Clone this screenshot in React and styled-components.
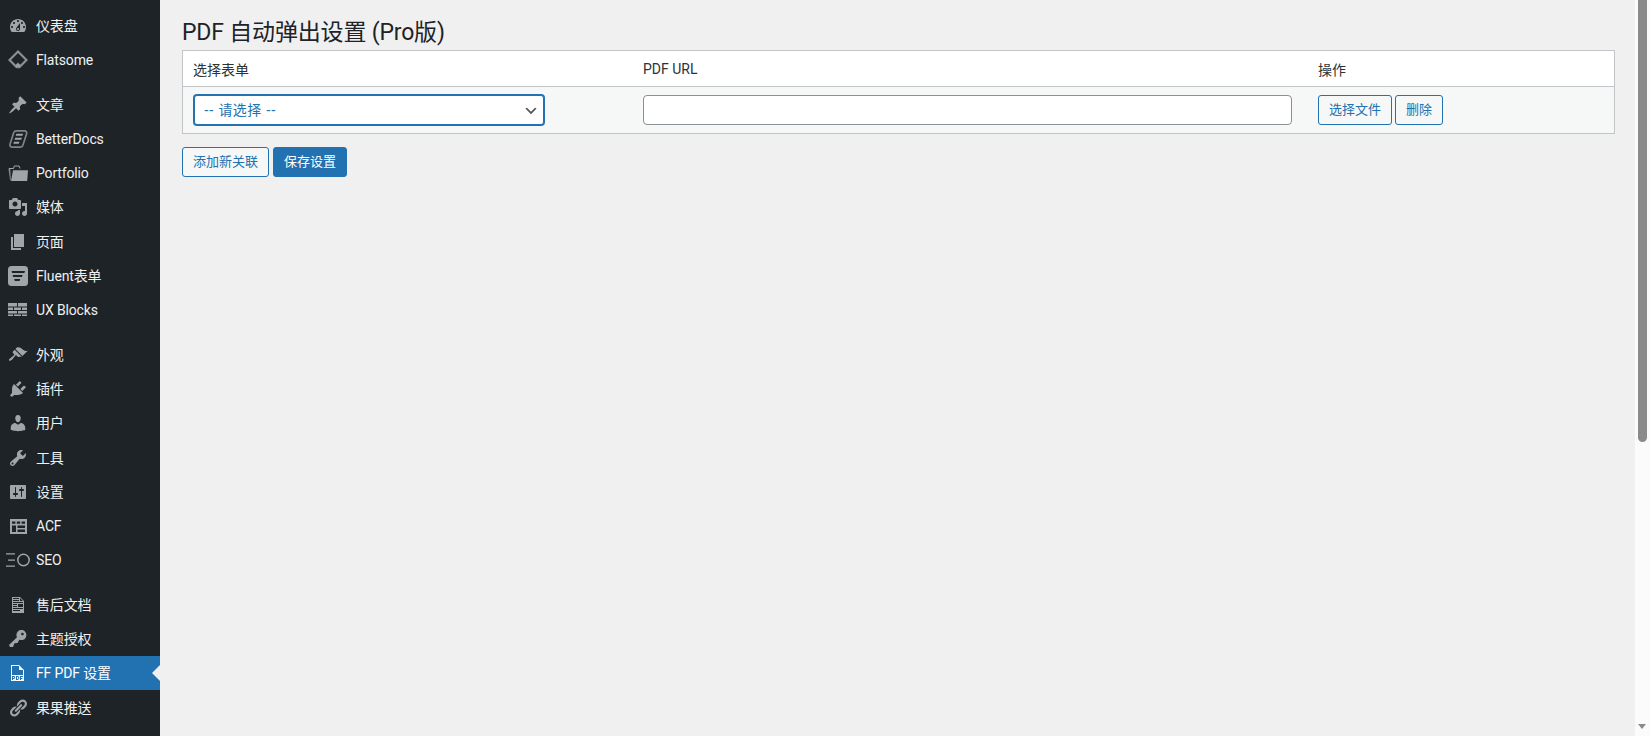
import React from "react";
import styled, { createGlobalStyle } from "styled-components";

const FONT = `Roboto, "Noto Sans CJK SC", sans-serif`;
const CHEVRON = `url("data:image/svg+xml,%3Csvg xmlns='http://www.w3.org/2000/svg' width='20' height='20' viewBox='0 0 20 20'%3E%3Cpath d='M5 6l5 5 5-5 2 1-7 7-7-7z' fill='%23555'/%3E%3C/svg%3E")`;

const Global = createGlobalStyle`
  html, body { margin: 0; height: 100%; overflow: hidden; background: #f0f0f1; }
  #root { height: 100%; }
  * { box-sizing: border-box; }
`;

const Page = styled.div`
  display: flex;
  height: 736px;
  font-family: ${FONT};
  color: #1d2327;
`;

const Sidebar = styled.nav`
  flex: 0 0 160px;
  height: 736px;
  overflow: hidden;
  background: #1d2327;
  padding-top: 8.8px;
`;

const MenuGroup = styled.ul`
  list-style: none;
  margin: 0 0 10px;
  padding: 0;
`;

const MenuItem = styled.li`
  position: relative;
  display: flex;
  align-items: center;
  height: 34.3px;
  padding-left: 36px;
  font-size: 14px;
  line-height: 18px;
  letter-spacing: -0.15px;
  color: ${(p) => (p.$active ? "#fff" : "#f0f0f1")};
  background: ${(p) => (p.$active ? "#2271b1" : "transparent")};

  &::after {
    content: "";
    display: ${(p) => (p.$active ? "block" : "none")};
    position: absolute;
    right: 0;
    top: 50%;
    margin-top: -8px;
    border: 8px solid transparent;
    border-left-width: 0;
    border-right-color: #f0f0f1;
  }
`;

const IconSlot = styled.span`
  position: absolute;
  left: ${(p) => p.$left ?? 8}px;
  top: 50%;
  transform: translateY(-50%);
  display: flex;
  color: ${(p) => (p.$active ? "#fff" : "#a0a5aa")};
`;

const Main = styled.main`
  flex: 1;
  min-width: 0;
  padding: 0 19px 0 22px;
`;

const Title = styled.h1`
  margin: 0;
  padding: 17px 0 0;
  height: 50px;
  font-size: 23px;
  font-weight: 400;
  line-height: 31px;
  letter-spacing: -0.18px;
  color: #1d2327;
`;

const Table = styled.table`
  width: 1433px;
  table-layout: fixed;
  border-collapse: separate;
  border-spacing: 0;
  border: 1px solid #c3c4c7;
  background: #fff;
  font-size: 13px;
`;

const HeadCell = styled.th`
  height: 36px;
  padding: 0 10px;
  text-align: left;
  font-weight: 400;
  font-size: 14px;
  color: #2c3338;
  background: #fff;
  border-bottom: 1px solid #c3c4c7;
`;

const BodyCell = styled.td`
  height: 46px;
  padding: 0 10px;
  background: #f6f7f7;
`;

const FormSelect = styled.select`
  display: block;
  appearance: none;
  width: 350px;
  height: 30px;
  margin-left: 1px;
  padding: 0 24px 0 9px;
  font: 14px/28px "Liberation Sans", "Noto Sans CJK SC", sans-serif;
  letter-spacing: 0.4px;
  color: #2271b1;
  background: #fff ${CHEVRON} no-repeat right 4px top 55%;
  background-size: 16px 16px;
  border: 1px solid #2271b1;
  border-radius: 3px;
  box-shadow: 0 0 0 1px #2271b1;
  outline: none;
`;

const UrlInput = styled.input`
  display: block;
  width: 649px;
  height: 30px;
  padding: 0 8px;
  font: 14px ${FONT};
  background: #fff;
  border: 1px solid #8c8f94;
  border-radius: 4px;
  outline: none;
`;

const ButtonRow = styled.div`
  display: flex;
  gap: ${(p) => p.$gap}px;
`;

const Button = styled.button`
  height: 30px;
  padding: 0 10px;
  font: 13px/28px ${FONT};
  color: ${(p) => (p.$primary ? "#fff" : "#2271b1")};
  background: ${(p) => (p.$primary ? "#2271b1" : "#f6f7f7")};
  border: 1px solid #2271b1;
  border-radius: 3px;
  white-space: nowrap;
`;

const Actions = styled(ButtonRow)`
  margin-top: 13px;
`;

const Scrollbar = styled.div`
  position: relative;
  flex: 0 0 15px;
  height: 736px;
  background: #fbfbfb;
`;

const Thumb = styled.div`
  position: absolute;
  left: 3px;
  top: 0;
  width: 9px;
  height: 442px;
  background: #8a8a8a;
  border-radius: 0 0 5px 5px;
`;

const ArrowDown = styled.div`
  position: absolute;
  left: 3px;
  bottom: 7px;
  border-style: solid;
  border-width: 5px 4.5px 0;
  border-color: #8a8a8a transparent transparent;
`;

const Svg = ({ size = 20, children, vb = "0 0 20 20" }) => (
  <svg width={size} height={size} viewBox={vb} fill="currentColor" aria-hidden="true">
    {children}
  </svg>
);

const P = (d) => () => <Svg><path d={d} /></Svg>;

const Dashboard = P("M3.76 16h12.48c1.1-1.37 1.76-3.11 1.76-5 0-4.42-3.58-8-8-8s-8 3.58-8 8c0 1.89.66 3.63 1.76 5zM10 4c.55 0 1 .45 1 1s-.45 1-1 1-1-.45-1-1 .45-1 1-1zM6 6c.55 0 1 .45 1 1s-.45 1-1 1-1-.45-1-1 .45-1 1-1zm8 0c.55 0 1 .45 1 1s-.45 1-1 1-1-.45-1-1 .45-1 1-1zm-5.37 5.55L12 7v6c0 1.1-.9 2-2 2s-2-.9-2-2c0-.57.24-1.08.63-1.45zM4 10c.55 0 1 .45 1 1s-.45 1-1 1-1-.45-1-1 .45-1 1-1zm12 0c.55 0 1 .45 1 1s-.45 1-1 1-1-.45-1-1 .45-1 1-1zm-5 3c0-.55-.45-1-1-1s-1 .45-1 1 .45 1 1 1 1-.45 1-1z");
const Pin = P("M10.44 3.02l1.82-1.82 6.36 6.35-1.83 1.82c-1.05-.68-2.48-.57-3.41.36l-.75.75c-.92.93-1.04 2.35-.35 3.41l-1.83 1.82-2.41-2.41-2.8 2.79c-.42.42-3.38 2.71-3.8 2.29s1.86-3.39 2.28-3.81l2.79-2.79L4.1 9.36l1.83-1.82c1.05.69 2.48.57 3.4-.36l.75-.75c.93-.92 1.05-2.35.36-3.41z");
const Brush = P("M14.48 11.06L7.41 3.99l1.5-1.5c.5-.56 2.3-.47 3.51.32 1.21.8 1.43 1.28 2.91 2.1 1.18.64 2.45 1.26 4.45.85zm-.71.71L6.7 4.7 4.93 6.47c-.39.39-.39 1.02 0 1.41l1.06 1.06c.39.39.39 1.03 0 1.42-.6.6-1.43 1.11-2.21 1.69-.35.26-.7.53-1.01.84C1.43 13.23.4 14.85 1.1 15.55s2.32-.33 3.66-1.67c.31-.31.58-.66.84-1.01.58-.78 1.09-1.61 1.69-2.21.39-.39 1.02-.39 1.41 0l1.06 1.06c.39.39 1.02.39 1.41 0z");
const Plug = P("M13.11 4.36L9.87 7.6 8 5.73l3.24-3.24c.35-.34 1.05-.2 1.56.32.52.51.66 1.21.31 1.55zm-8 1.77l.91-1.12 9.01 9.01-1.19.84c-.71.71-2.63 1.16-3.82 1.16H6.14L4.9 17.26c-.59.59-1.54.59-2.12 0-.59-.58-.59-1.53 0-2.12l1.24-1.24v-3.88c0-1.13.4-3.19 1.09-3.89zm7.26 3.97l3.24-3.24c.34-.35 1.04-.21 1.55.31.52.51.66 1.21.31 1.55l-3.24 3.25z");
const User = P("M10 9.25c-2.27 0-2.73-3.44-2.73-3.44C7 4.02 7.82 2 9.97 2c2.16 0 2.98 2.02 2.71 3.81 0 0-.41 3.44-2.68 3.44zm0 2.57L12.72 10c2.39 0 4.52 2.33 4.52 4.53v2.49s-3.65 1.13-7.24 1.13c-3.65 0-7.24-1.13-7.24-1.13v-2.49c0-2.25 1.94-4.48 4.47-4.48z");
const Wrench = P("M16.68 9.77c-1.34 1.34-3.3 1.67-4.95.99l-5.41 6.52c-.99.99-2.59.99-3.58 0s-.99-2.59 0-3.57l6.52-5.42c-.68-1.65-.35-3.61.99-4.95 1.28-1.28 3.12-1.62 4.72-1.06l-2.89 2.89 2.82 2.82 2.86-2.87c.53 1.58.18 3.39-1.08 4.65zM3.81 16.21c.4.39 1.04.39 1.43 0 .4-.4.4-1.04 0-1.43-.39-.4-1.03-.4-1.43 0-.39.39-.39 1.03 0 1.43z");
const Sliders = P("M18 16V4c0-.55-.45-1-1-1H3c-.55 0-1 .45-1 1v12c0 .55.45 1 1 1h14c.55 0 1-.45 1-1zM8 11h1c.55 0 1 .45 1 1s-.45 1-1 1H8v1.5c0 .28-.22.5-.5.5s-.5-.22-.5-.5V13H6c-.55 0-1-.45-1-1s.45-1 1-1h1V5.5c0-.28.22-.5.5-.5s.5.22.5.5V11zm5-2h-1c-.55 0-1-.45-1-1s.45-1 1-1h1V5.5c0-.28.22-.5.5-.5s.5.22.5.5V7h1c.55 0 1 .45 1 1s-.45 1-1 1h-1v5.5c0 .28-.22.5-.5.5s-.5-.22-.5-.5V9z");
const Media = P("M13 11V4c0-.55-.45-1-1-1h-1.67L9 1H5L3.67 3H2c-.55 0-1 .45-1 1v7c0 .55.45 1 1 1h10c.55 0 1-.45 1-1zM7 4.5c1.38 0 2.5 1.12 2.5 2.5S8.38 9.5 7 9.5 4.5 8.38 4.5 7 5.62 4.5 7 4.5zM14 6h5v10.5c0 1.38-1.12 2.5-2.5 2.5S14 17.88 14 16.5s1.12-2.5 2.5-2.5c.17 0 .34.02.5.05V9h-3V6zm-4 8.05V13h2v3.5c0 1.38-1.12 2.5-2.5 2.5S7 17.88 7 16.5 8.12 14 9.5 14c.17 0 .34.02.5.05z");
const Pages = P("M6 15V2h10v13H6zm-1 1h8v2H3V5h2v11z");
const Key = P("M16.95 2.58c1.96 1.95 1.96 5.12 0 7.07-1.51 1.51-3.75 1.84-5.59 1.01l-1.87 3.31-2.99.31L5 18H2l-1-2 7.95-7.69c-.92-1.87-.62-4.18.93-5.73 1.95-1.96 5.12-1.96 7.07 0zm-2.51 3.79c.74 0 1.33-.6 1.33-1.34 0-.73-.59-1.33-1.33-1.33-.73 0-1.33.6-1.33 1.33 0 .74.6 1.34 1.33 1.34z");
const Link = P("M17.74 2.76c1.68 1.69 1.68 4.41 0 6.1l-1.53 1.52c-1.12 1.12-2.7 1.47-4.14 1.09l2.62-2.61.76-.77.76-.76c.84-.84.84-2.2 0-3.04-.84-.85-2.2-.85-3.04 0l-.77.76-3.38 3.38c-.37-1.44-.02-3.02 1.1-4.14l1.52-1.53c1.69-1.68 4.42-1.68 6.1 0zM8.59 13.43l5.34-5.34c.42-.42.42-1.1 0-1.52-.44-.43-1.13-.39-1.53 0l-5.33 5.34c-.42.42-.42 1.1 0 1.52.44.43 1.13.39 1.52 0zm-.76 2.29l4.14-4.15c.38 1.44.03 3.02-1.09 4.14l-1.52 1.53c-1.69 1.68-4.41 1.68-6.1 0-1.68-1.68-1.68-4.42 0-6.1l1.53-1.52c1.12-1.12 2.7-1.47 4.14-1.1l-4.14 4.15c-.85.84-.85 2.2 0 3.05.84.84 2.2.84 3.04 0z");
const Doc = P("M12 2l4 4v12H4V2h8zM5 3v1h6V3H5zm7 3h3l-3-3v3zM5 5v1h6V5H5zm10 3V7H5v1h10zM5 9v1h4V9H5zm10 3V9h-5v3h5zM5 11v1h4v-1H5zm10 3v-1H5v1h10zm-3 2v-1H5v1h7z");
const Pdf = P("M5.8 14H5v1h.8c.3 0 .5-.2.5-.5s-.2-.5-.5-.5zM11 2H3v16h13V7l-5-5zM7.2 14.6c0 .8-.6 1.4-1.4 1.4H5v1H4v-4h1.8c.8 0 1.4.6 1.4 1.4v.2zm4.1.5c0 1-.8 1.9-1.9 1.9H8v-4h1.4c1 0 1.9.8 1.9 1.9v.2zM15 14h-2v1h1.5v1H13v1h-1v-4h3v1zm0-2H4V3h7v4h4v5zm-5.6 2H9v2h.4c.6 0 1-.4 1-1s-.4-1-1-1z");

const Flatsome = () => (
  <Svg>
    <path
      fillRule="evenodd"
      opacity=".85"
      d="M10 0L20 10L11.800 18.200L10 16.400L8.200 18.200L0 10ZM10 3L3 10L7.800 14.800L10 12.600L12.200 14.800L17 10Z"
    />
    <circle cx="10" cy="16.200" r="2.200" opacity=".7" />
  </Svg>
);

const Folder = () => (
  <Svg>
    <path
      d="M.8 5.500h4.700L6.300 3h4.800l.9 2.500"
      fill="none"
      stroke="currentColor"
      strokeWidth="1"
    />
    <path d="M.5 6h1.800L2.800 17l-.7.400z" opacity=".8" />
    <path d="M5 7.300H20L19.200 18H3z" />
  </Svg>
);

const BetterDocs = () => (
  <Svg>
    <path
      d="M8.500 1.800h8c1.600 0 2.600 1.400 2.100 2.900l-3.700 11.600c-.5 1.200-1.500 1.900-2.800 1.900h-8c-1.600 0-2.600-1.400-2.100-2.900L5.700 3.700c.4-1.200 1.500-1.900 2.800-1.900z"
      fill="none"
      stroke="currentColor"
      strokeWidth="1.700"
      opacity=".75"
    />
    <path d="M8.400 4.800h6.700l-.7 2H7.700zM7.200 8.800h6.700l-.7 2H6.500zM6 12.800h5.500l-.7 2H5.300z" />
  </Svg>
);

const Fluent = () => (
  <Svg>
    <path
      fillRule="evenodd"
      d="M3.500 0h13A3.500 3.500 0 0 1 20 3.500v13a3.500 3.500 0 0 1-3.500 3.500h-13A3.500 3.500 0 0 1 0 16.500v-13A3.500 3.500 0 0 1 3.500 0zM3.500 5l.6 2h12.300l.6-2zM4.600 9l.6 2h8.800l.6-2zM6.200 13l.6 2h4.800l.6-2z"
    />
  </Svg>
);

const Blocks = () => (
  <Svg>
    <path d="M0 3h9v3.500H0zM10 3h9v3.500h-9zM0 7.500h5v2.500H0zM6 7.500h7v2.500H6zM14 7.500h5v2.500h-5zM0 11h9v2.500H0zM10 11h9v2.500h-9zM0 14.500h5V16H0zM6 14.500h7V16H6zM14 14.500h5V16h-5z" />
  </Svg>
);

const Acf = () => (
  <Svg>
    <path
      fillRule="evenodd"
      d="M2 3h17v15H2zM4 5.500v2.200h3.400V5.500zM8.800 5.500v2.200h3.400V5.500zM13.600 5.500v2.200H17V5.500zM4 9.500v6.500h4V9.500zM9.500 9.500v2.400H17V9.500zM9.500 13.500V16H17v-2.500z"
    />
  </Svg>
);

const Seo = () => (
  <Svg size={24} vb="0 0 24 20">
    <path d="M0 3.300h9v1.300H0zM2 9.400h7v1.300H2zM0 15.400h9v1.300H0z" />
    <circle cx="17.500" cy="10" r="5.700" fill="none" stroke="currentColor" strokeWidth="1.500" />
  </Svg>
);

const GROUPS = [
  [
    { label: "仪表盘", Icon: Dashboard },
    { label: "Flatsome", Icon: Flatsome },
  ],
  [
    { label: "文章", Icon: Pin },
    { label: "BetterDocs", Icon: BetterDocs },
    { label: "Portfolio", Icon: Folder },
    { label: "媒体", Icon: Media },
    { label: "页面", Icon: Pages },
    { label: "Fluent表单", Icon: Fluent },
    { label: "UX Blocks", Icon: Blocks },
  ],
  [
    { label: "外观", Icon: Brush },
    { label: "插件", Icon: Plug },
    { label: "用户", Icon: User },
    { label: "工具", Icon: Wrench },
    { label: "设置", Icon: Sliders },
    { label: "ACF", Icon: Acf },
    { label: "SEO", Icon: Seo, left: 6 },
  ],
  [
    { label: "售后文档", Icon: Doc },
    { label: "主题授权", Icon: Key },
    { label: "FF PDF 设置", Icon: Pdf, active: true },
    { label: "果果推送", Icon: Link },
  ],
];

export default function App() {
  return (
    <Page>
      <Global />
      <Sidebar>
        {GROUPS.map((items, i) => (
          <MenuGroup key={i}>
            {items.map(({ label, Icon, left, active }) => (
              <MenuItem key={label} $active={active}>
                <IconSlot $left={left} $active={active}>
                  <Icon />
                </IconSlot>
                {label}
              </MenuItem>
            ))}
          </MenuGroup>
        ))}
      </Sidebar>
      <Main>
        <Title>PDF 自动弹出设置 (Pro版)</Title>
        <Table>
          <colgroup>
            <col width="450" />
            <col width="675" />
            <col />
          </colgroup>
          <thead>
            <tr>
              <HeadCell>选择表单</HeadCell>
              <HeadCell>PDF URL</HeadCell>
              <HeadCell>操作</HeadCell>
            </tr>
          </thead>
          <tbody>
            <tr>
              <BodyCell>
                <FormSelect defaultValue="">
                  <option value="">-- 请选择 --</option>
                </FormSelect>
              </BodyCell>
              <BodyCell>
                <UrlInput type="text" />
              </BodyCell>
              <BodyCell>
                <ButtonRow $gap={3}>
                  <Button>选择文件</Button>
                  <Button>删除</Button>
                </ButtonRow>
              </BodyCell>
            </tr>
          </tbody>
        </Table>
        <Actions $gap={4}>
          <Button>添加新关联</Button>
          <Button $primary>保存设置</Button>
        </Actions>
      </Main>
      <Scrollbar>
        <Thumb />
        <ArrowDown />
      </Scrollbar>
    </Page>
  );
}
